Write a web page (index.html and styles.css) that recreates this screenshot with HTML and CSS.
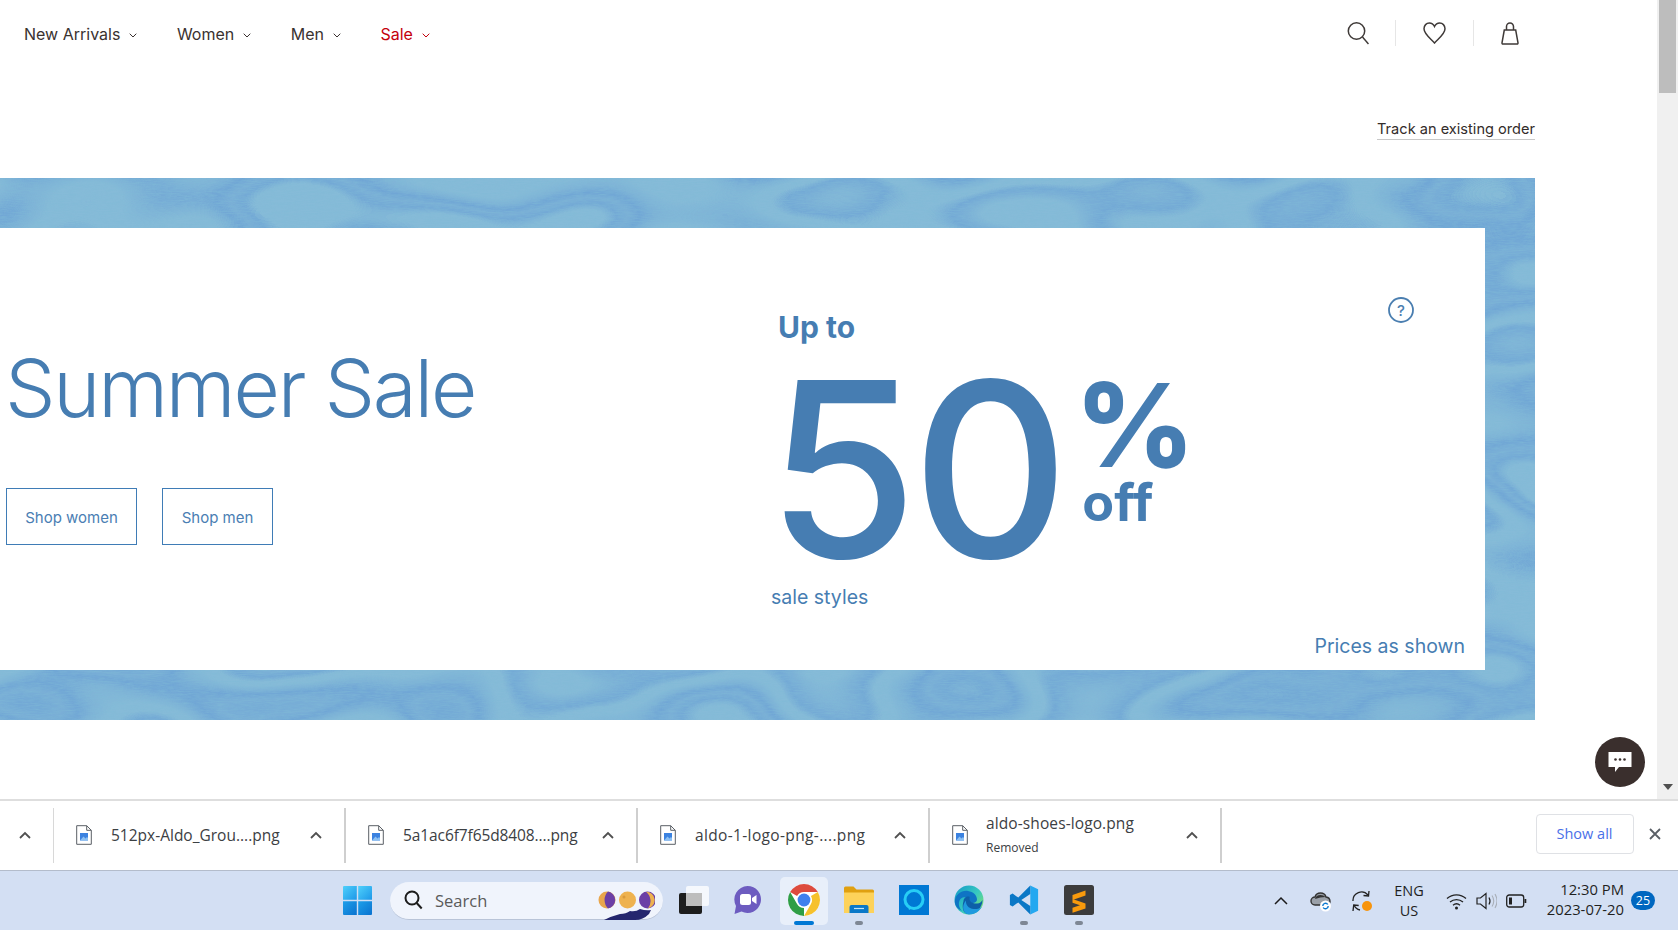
FILE: index.html
```html
<!DOCTYPE html>
<html lang="en">
<head>
<meta charset="utf-8">
<title>Summer Sale</title>
<link rel="stylesheet" href="styles.css">
</head>
<body>
<div class="window">
  <main class="page">
    <header class="topbar">
      <nav class="nav">
        <a class="nav-item">New Arrivals<svg class="chev" viewBox="0 0 8 5"><path d="M.7.7 4 4 7.3.7"/></svg></a>
        <a class="nav-item">Women<svg class="chev" viewBox="0 0 8 5"><path d="M.7.7 4 4 7.3.7"/></svg></a>
        <a class="nav-item">Men<svg class="chev" viewBox="0 0 8 5"><path d="M.7.7 4 4 7.3.7"/></svg></a>
        <a class="nav-item sale">Sale<svg class="chev" viewBox="0 0 8 5"><path d="M.7.7 4 4 7.3.7"/></svg></a>
      </nav>
      <div class="tools">
        <svg class="tool" width="22" height="24" viewBox="0 0 22 24"><circle cx="9.5" cy="10" r="8.2"/><path d="m15.5 16 6 7"/></svg>
        <span class="tool-sep first-sep"></span>
        <svg class="tool" width="23" height="22" viewBox="0 0 23 22"><path d="M11.500 21C7.500 16.500 1 12 1 6.800 1 3.400 3.400 1 6.300 1c2.300 0 4.200 1.400 5.200 3.500C12.500 2.400 14.400 1 16.700 1 19.600 1 22 3.400 22 6.800 22 12 15.500 16.500 11.500 21z"/></svg>
        <span class="tool-sep"></span>
        <svg class="tool" width="18" height="23" viewBox="0 0 18 23"><path d="M3.300 8 1 20.800q-.1 1.200 1 1.200h14q1.100 0 1-1.200L14.700 8zM5.500 8V4.500a3.500 3.500 0 0 1 7 0V8"/></svg>
      </div>
    </header>
    <div class="track-row"><a class="track">Track an existing order</a></div>
    <section class="hero">
      <svg class="texture" aria-hidden="true">
        <filter id="wood" x="0" y="0" width="100%" height="100%" color-interpolation-filters="sRGB">
          <feTurbulence type="fractalNoise" baseFrequency="0.005 0.011" numOctaves="2" seed="23" result="n"/>
          <feColorMatrix in="n" type="matrix" values="0 0 0 0 .42  0 0 0 0 .63  0 0 0 0 .83  1.6 0 0 0 -.3"/>
          <feComponentTransfer result="bands"><feFuncA type="table" tableValues="0 0 0 .7 .45 .8 .3 0 0 .7 .4 0 0 0"/></feComponentTransfer>
          <feTurbulence type="fractalNoise" baseFrequency="0.12 1.1" numOctaves="2" seed="3"/>
          <feColorMatrix type="matrix" values="0 0 0 0 .5  0 0 0 0 .73  0 0 0 0 .84  0 1 0 0 -.35" result="grain"/>
          <feMerge><feMergeNode in="bands"/><feMergeNode in="grain"/></feMerge>
        </filter>
        <rect width="100%" height="100%" filter="url(#wood)"/>
      </svg>
      <div class="panel">
        <div class="panel-left">
          <h1 class="title">Summer Sale</h1>
          <div class="actions">
            <a class="btn btn-women">Shop women</a>
            <a class="btn btn-men">Shop men</a>
          </div>
        </div>
        <div class="promo">
          <div class="upto">Up to</div>
          <div class="deal">
            <span class="fifty">50</span>
            <span class="deal-side"><span class="pct">%</span><span class="off">off</span></span>
          </div>
          <div class="styles">sale styles</div>
        </div>
        <svg class="help" width="26" height="26" viewBox="0 0 26 26"><circle cx="13" cy="13" r="12"/><text x="13" y="18.500" text-anchor="middle">?</text></svg>
        <div class="prices">Prices as shown</div>
      </div>
    </section>
    <button class="chat" aria-label="Chat"><svg width="24" height="21" viewBox="0 0 24 21"><path d="M.5 0h23v15H11l-4 5v-5H.5z" fill="#fff"/><circle cx="7.500" cy="7.500" r="1.300" fill="#3a2f2d"/><circle cx="12" cy="7.500" r="1.300" fill="#3a2f2d"/><circle cx="16.500" cy="7.500" r="1.300" fill="#3a2f2d"/></svg></button>
  </main>
  <aside class="scrollbar">
    <div class="thumb"></div>
    <svg class="scroll-down" width="10" height="6" viewBox="0 0 10 6"><path d="M0 0h10L5 6z" fill="#505050"/></svg>
  </aside>
</div>

<div class="downloads">
  <div class="dl-toggle"><svg class="caret" viewBox="0 0 12 8"><path d="M1 7 6 2l5 5"/></svg></div>
  <div class="dl-item">
    <svg class="file" viewBox="0 0 16 20"><path class="file-page" d="M.7.7h10l4.600 4.600V19.300H.7z"/><path class="file-fold" d="M10.700.7v4.600h4.600"/><path class="file-pic" d="M4 8h8v7.500H4z"/><path class="file-hill" d="m4 15.500 3.500-4 2 2 1.500-1.500 1 1v2.500z"/></svg>
    <span class="dl-name">512px-Aldo_Grou....png</span>
    <svg class="caret dl-caret" viewBox="0 0 12 8"><path d="M1 7 6 2l5 5"/></svg>
  </div>
  <div class="dl-item">
    <svg class="file" viewBox="0 0 16 20"><path class="file-page" d="M.7.7h10l4.600 4.600V19.300H.7z"/><path class="file-fold" d="M10.700.7v4.600h4.600"/><path class="file-pic" d="M4 8h8v7.500H4z"/><path class="file-hill" d="m4 15.500 3.500-4 2 2 1.500-1.500 1 1v2.500z"/></svg>
    <span class="dl-name dl-tight">5a1ac6f7f65d8408....png</span>
    <svg class="caret dl-caret" viewBox="0 0 12 8"><path d="M1 7 6 2l5 5"/></svg>
  </div>
  <div class="dl-item">
    <svg class="file" viewBox="0 0 16 20"><path class="file-page" d="M.7.7h10l4.600 4.600V19.300H.7z"/><path class="file-fold" d="M10.700.7v4.600h4.600"/><path class="file-pic" d="M4 8h8v7.500H4z"/><path class="file-hill" d="m4 15.500 3.500-4 2 2 1.500-1.500 1 1v2.500z"/></svg>
    <span class="dl-name dl-wide">aldo-1-logo-png-....png</span>
    <svg class="caret dl-caret" viewBox="0 0 12 8"><path d="M1 7 6 2l5 5"/></svg>
  </div>
  <div class="dl-item">
    <svg class="file" viewBox="0 0 16 20"><path class="file-page" d="M.7.7h10l4.600 4.600V19.300H.7z"/><path class="file-fold" d="M10.700.7v4.600h4.600"/><path class="file-pic" d="M4 8h8v7.500H4z"/><path class="file-hill" d="m4 15.500 3.500-4 2 2 1.500-1.500 1 1v2.500z"/></svg>
    <span class="dl-name dl-stack">aldo-shoes-logo.png<small class="dl-status">Removed</small></span>
    <svg class="caret dl-caret" viewBox="0 0 12 8"><path d="M1 7 6 2l5 5"/></svg>
  </div>
  <a class="show-all">Show all</a>
  <svg class="dl-close" width="12" height="12" viewBox="0 0 12 12"><path d="m1 1 10 10M11 1 1 11"/></svg>
</div>

<footer class="taskbar">
  <svg class="start" width="29" height="29" viewBox="0 0 29 29">
    <defs>
      <linearGradient id="win1" x1="0" y1="0" x2="1" y2="1"><stop offset="0" stop-color="#4fd0fb"/><stop offset="1" stop-color="#1c97e8"/></linearGradient>
      <linearGradient id="win2" x1="0" y1="0" x2="1" y2="1"><stop offset="0" stop-color="#1ea0ea"/><stop offset="1" stop-color="#0a72cf"/></linearGradient>
    </defs>
    <path d="M1 0h12.800v13.800H0V1q0-1 1-1z" fill="url(#win1)"/><path d="M15.200 0H28q1 0 1 1v12.800H15.200z" fill="url(#win1)"/><path d="M0 15.200h13.800V29H1q-1 0-1-1z" fill="url(#win2)"/><path d="M15.200 15.200H29V28q0 1-1 1H15.200z" fill="url(#win2)"/>
  </svg>
  <div class="search">
    <svg class="search-ic" width="19" height="20" viewBox="0 0 19 20"><circle cx="8" cy="8" r="6.500"/><path d="m12.700 13 5 5.500"/></svg>
    <span class="search-text">Search</span>
    <svg class="moons" width="62" height="38" viewBox="0 0 62 38">
      <circle cx="14" cy="18" r="8.500" fill="#e9a64c"/><path d="M15 9.600a8.500 8.500 0 0 1 0 16.800 12 12 0 0 1 0-16.800z" fill="#6b3fa6"/>
      <circle cx="34.500" cy="18" r="8.500" fill="#eeb24f"/><circle cx="31" cy="15" r="1.500" fill="#d99a3c"/>
      <circle cx="54.500" cy="18" r="8.500" fill="#6b3fa6"/><path d="M53 9.700a8.500 8.500 0 0 1 2 16.800 12 12 0 0 0-2-16.800z" fill="#eeb24f"/>
      <path d="M11 38q8-4 16-6 6 0 10-3 6 1 10-2 6 2 11 1l-2 4q-6 6-14 6z" fill="#24266e"/>
    </svg>
  </div>
  <div class="apps">
    <span class="app">
      <svg width="30" height="30" viewBox="0 0 30 30"><rect x="0" y="8" width="23" height="21" rx="2" fill="#1d1d1d"/><rect x="7" y="1" width="23" height="20" rx="2" fill="#fff" opacity=".78"/><rect x="7" y="8" width="16" height="13" fill="#bdbdbd"/></svg>
    </span>
    <span class="app app-meet">
      <svg width="30" height="30" viewBox="0 0 30 30"><path d="M15.500 1a13.500 13.500 0 1 1-6 25.600L2.500 29 4 21A13.500 13.500 0 0 1 15.500 1z" fill="#6d5cc0"/><rect x="8" y="9" width="11" height="11" rx="2.500" fill="#fff"/><path d="m20 13 4.500-3v9L20 16z" fill="#fff"/></svg>
    </span>
    <span class="app app-active">
      <svg width="32" height="32" viewBox="4 4 40 40"><circle cx="24" cy="24" r="20" fill="#fff"/><path d="M6.680 14A20 20 0 0 1 41.320 14H24a10 10 0 0 0-8.660 5z" fill="#dd4b3e"/><path d="M6.680 14A20 20 0 0 0 24 44l0-10a10 10 0 0 1-8.660-5z" fill="#2f9e46"/><path d="M41.320 14A20 20 0 0 1 24 44l8.660-15a10 10 0 0 0 0-10z" fill="#f6c12c"/><circle cx="24" cy="24" r="8" fill="#4080ee"/></svg>
      <i class="dot-active"></i>
    </span>
    <span class="app">
      <svg width="30" height="30" viewBox="0 0 30 30"><path d="M0 3q0-1.500 1.500-1.500h8l3 3h16q1.500 0 1.500 1.500v5H0z" fill="#e0a010"/><path d="M0 7.500h30V28H0z" fill="#fdd25a"/><path d="M5.500 22q0-2 2-2h15q2 0 2 2v6h-19z" fill="#0a78c8"/><path d="M10 23.500h10" stroke="#bfe3f8" stroke-width="1.200"/></svg>
      <i class="dot"></i>
    </span>
    <span class="app">
      <svg width="30" height="30" viewBox="0 0 30 30"><rect width="30" height="30" fill="#0078d4"/><circle cx="15" cy="14.500" r="9" fill="none" stroke="#27cdf5" stroke-width="3"/><path d="m9 21 1 4 4-2.500z" fill="#27cdf5"/></svg>
    </span>
    <span class="app">
      <svg width="30" height="30" viewBox="0 0 30 30">
        <defs><linearGradient id="edge1" x1="0" y1="0" x2="1" y2=".8"><stop offset="0" stop-color="#1298c8"/><stop offset=".6" stop-color="#38c9c0"/><stop offset="1" stop-color="#7de06e"/></linearGradient></defs>
        <circle cx="15" cy="15" r="14.500" fill="url(#edge1)"/>
        <path d="M.8 17C1 9 8 5 14 6c5 .800 9 4 9 8.500 0 2-2 3.500-4.500 3.500-2 0-3.500-.700-3.500-2.500 0-3-5-4.500-8-2C4 16 4 22 8 26 3.500 24 1 21 .8 17z" fill="#0f74c4"/>
        <path d="M9.500 16c0-3 3-5 5.500-4.500 1 .200.500 1 .500 2.500 0 3 4 5 8 4.500 2-.200 4-1.500 5-3.500-.300 8-6.500 14-13.500 14-7 0-7-8-5.500-13z" fill="#0d5fa8"/>
        <path d="M15 29.500C9 29 7 21 12 15.500c-.500 4 2 8 8 8.500 3 .200 6-.500 8-2.500-2.500 5-7.500 8-13 8z" fill="#1f9adf"/>
      </svg>
    </span>
    <span class="app">
      <svg width="30" height="30" viewBox="0 0 100 100"><path d="M71 2 97 14v72L71 98z" fill="#24a8f0"/><path d="M71 2 31 42 12 28 3 33v34l9 5 19-14 40 40V70L41 50 71 30z" fill="#0b78c6"/></svg>
      <i class="dot"></i>
    </span>
    <span class="app">
      <svg width="30" height="30" viewBox="0 0 30 30"><rect width="30" height="30" rx="2.500" fill="#3c3c3c"/><path d="M21.500 5.500v5L8.500 15v-5zM8.500 14l13 4.500v5l-13 4.200v-5l7.500-2.500-7.500-2.500z" fill="#f89a0c"/></svg>
      <i class="dot"></i>
    </span>
  </div>
  <div class="tray">
    <svg class="tray-caret" width="14" height="9" viewBox="0 0 14 9"><path d="M1 8 7 2l6 6"/></svg>
    <svg class="tray-ic cloud" width="22" height="22" viewBox="0 0 22 22"><path d="M5 15a4 4 0 0 1 0-8q1-4 5.500-4 4.500 0 5.500 4 4 .500 4 4.500 0 3.500-4 3.500z" fill="#9aa0a8" stroke="#333" stroke-width="1.400"/><path d="M5 9q1-4 5.500-4 3 0 5 2-5 0-10.500 2z" fill="#333"/><circle cx="15.500" cy="16" r="5.500" fill="#fff"/><path d="M12.800 16a2.700 2.700 0 0 1 5-1.500M18.200 16a2.700 2.700 0 0 1-5 1.500" fill="none" stroke="#0b78d0" stroke-width="1.400"/></svg>
    <svg class="tray-ic sync" width="22" height="22" viewBox="0 0 22 22"><path d="M2 11a8.500 8.500 0 0 1 15-6M3 15a8.500 8.500 0 0 0 6 5" fill="none" stroke="#222" stroke-width="1.300"/><path d="m18 1 -.500 5-5-.500M2 21l.700-6 5 .500" fill="none" stroke="#222" stroke-width="1.300"/><circle cx="16" cy="16" r="5" fill="#f7940c"/></svg>
    <div class="lang"><span>ENG</span><span>US</span></div>
    <svg class="tray-ic wifi" width="21" height="18" viewBox="0 0 21 18"><path d="M1 6.500a14 14 0 0 1 19 0M4 10a10 10 0 0 1 13 0M7 13.200a5.500 5.500 0 0 1 7 0" fill="none" stroke="#222" stroke-width="1.300"/><circle cx="10.500" cy="16" r="1.500" fill="#222"/></svg>
    <svg class="tray-ic vol" width="21" height="18" viewBox="0 0 21 18"><path d="M1 6h3.500L10 1.500v15L4.500 12H1z" fill="none" stroke="#222" stroke-width="1.200"/><path d="M13 5.500q2 3.500 0 7" fill="none" stroke="#222" stroke-width="1.200"/><path d="M16 3.500q3.500 5.500 0 11M19 2q4 7 0 14" fill="none" stroke="#a9afb8" stroke-width="1.100"/></svg>
    <svg class="tray-ic batt" width="21" height="14" viewBox="0 0 21 14"><rect x=".7" y="1" width="17" height="12" rx="2.500" fill="none" stroke="#222" stroke-width="1.300"/><rect x="3" y="3.500" width="3" height="7" fill="#222"/><path d="M18.500 5h1.800v4h-1.800z" fill="#222"/></svg>
    <div class="clock"><span>12:30 PM</span><span>2023-07-20</span></div>
    <span class="badge">25</span>
  </div>
</footer>
</body>
</html>
```

FILE: styles.css
```css
* { box-sizing: border-box; }
html, body { margin: 0; padding: 0; }
body {
  width: 1678px;
  height: 930px;
  overflow: hidden;
  display: flex;
  flex-direction: column;
  background: #fff;
  font-family: "Inter", "Liberation Sans", sans-serif;
  color: #3a3230;
}

/* browser viewport */
.window { height: 799px; display: flex; }
.page { flex: 1; position: relative; overflow: hidden; background: #fff; }
.scrollbar { width: 21px; background: #f0f0f0; display: flex; flex-direction: column; align-items: center; justify-content: space-between; padding: 0 0 9px; }
.thumb { width: 17px; height: 93px; background: #bdbdbd; }

/* header */
.topbar { height: 68px; display: flex; align-items: center; justify-content: space-between; padding: 0 138px 0 24px; }
.nav { display: flex; gap: 39.500px; }
.nav-item { display: flex; align-items: center; font-size: 16px; line-height: 20px; color: #3a3230; }
.nav-item.sale { color: #c4000c; }
.chev { width: 8px; height: 5px; margin-left: 9px; margin-top: 2px; fill: none; stroke: currentColor; stroke-width: 1; }
.tools { display: flex; align-items: center; gap: 27px; margin-top: -2px; }
.tool { fill: none; stroke: #3f3a38; stroke-width: 1.500; display: block; }
.tool-sep { width: 1px; height: 26px; background: #e6e6e6; }
.first-sep { margin-left: -1px; }

.track-row { height: 110px; display: flex; justify-content: flex-end; padding: 52px 122px 0 0; }
.track { font-size: 14.600px; line-height: 19px; height: 20px; border-bottom: 1px solid #c8c8c8; color: #332c2a; }

/* hero */
.hero { position: relative; width: 1535px; height: 542px; padding: 50px 50px 50px 0; background: #86bbd8; }
.texture { position: absolute; inset: 0; width: 100%; height: 100%; display: block; }
.panel { position: relative; height: 442px; background: #fff; display: flex; color: #467db2; }
.panel-left { width: 771px; padding: 110px 0 0 6px; }
.title { margin: 0 0 0 -1px; font-size: 80px; line-height: 100px; font-weight: 300; letter-spacing: -2.200px; color: #467db2; white-space: nowrap; }
.actions { display: flex; gap: 25px; margin-top: 50px; }
.btn { height: 57px; padding-top: 1px; display: flex; align-items: center; justify-content: center; border: 1.500px solid #3f7cb6; font-size: 15px; color: #4a7eb3; }
.btn-women { width: 131px; }
.btn-men { width: 111px; }

.promo { padding-top: 81px; }
.upto { font-size: 30px; line-height: 36px; font-weight: 700; margin-left: 7px; }
.deal { display: flex; margin-top: 25px; height: 214px; }
.fifty { font-size: 244px; line-height: 200px; height: 200px; font-weight: 500; letter-spacing: -6px; margin-left: -4px; }
.deal-side { display: flex; flex-direction: column; margin-left: 12px; padding-top: 5px; }
.pct { font-size: 116px; line-height: 100px; font-weight: 800; }
.off { font-size: 52px; line-height: 50px; font-weight: 700; margin: 3px 0 0 7px; }
.styles { font-size: 19.500px; line-height: 26px; }

.help { position: absolute; left: 1388px; top: 69px; }
.help circle { fill: none; stroke: #4a7eb0; stroke-width: 1.800; }
.help text { font-family: "Inter", sans-serif; font-size: 15px; font-weight: 500; fill: #4a7eb0; }
.prices { position: absolute; right: 20px; bottom: 11px; font-size: 19.500px; line-height: 26px; }

.chat { position: absolute; left: 1595px; top: 737px; width: 50px; height: 50px; border: 0; border-radius: 50%; background: #3a2f2d; padding: 0; display: flex; align-items: center; justify-content: center; }

/* downloads bar */
.downloads { height: 71px; background: #fff; border-top: 2px solid #dedede; display: flex; align-items: center; font-family: "Open Sans", "Noto Sans", sans-serif; }
.dl-toggle { width: 54px; height: 55px; border-right: 1px solid #d8d8d8; display: flex; align-items: center; padding: 0 0 2px 19px; }
.caret { width: 12px; height: 8px; fill: none; stroke: #505050; stroke-width: 1.800; display: block; }
.dl-item { width: 292px; height: 55px; border-right: 2px solid #cfcfcf; display: flex; align-items: center; padding: 0 22px 2px 22px; }
.file { width: 16px; height: 20px; flex: none; }
.file-page { fill: #fff; stroke: #5a5f66; stroke-width: 1; }
.file-fold { fill: none; stroke: #5a5f66; stroke-width: 1; }
.file-pic { fill: #3b82e0; }
.file-hill { fill: #8cc0f2; }
.dl-name { margin-left: 19px; font-size: 15.500px; line-height: 20px; color: #3c4043; flex: 1; white-space: nowrap; }
.dl-tight { letter-spacing: -.1px; }
.dl-wide { letter-spacing: .35px; }
.dl-stack { display: flex; flex-direction: column; margin-left: 18px; letter-spacing: .1px; }
.dl-status { font-size: 12px; line-height: 17px; margin-top: 6px; color: #3c4043; letter-spacing: 0; }
.dl-caret { flex: none; }
.show-all { margin: 0 0 3px auto; width: 98px; height: 40px; padding: 0 1px 2px 0; border: 1px solid #dfe1e5; border-radius: 4px; display: flex; align-items: center; justify-content: center; font-size: 14.500px; color: #4a6fe8; }
.dl-close { margin: 0 17px 3px 15px; fill: none; stroke: #5a5f66; stroke-width: 1.800; }

/* taskbar */
.taskbar { flex: 1; background: #d3dff3; border-top: 1px solid #b3bccb; display: flex; align-items: center; padding-left: 343px; font-family: "Open Sans", "Noto Sans", sans-serif; color: #1f1f1f; }
.start { flex: none; }
.search { width: 273px; height: 38px; margin-left: 18px; border-radius: 19px; background: #f0f4fc; border-bottom: 1px solid #b9c4d8; display: flex; align-items: center; padding-left: 14px; position: relative; }
.search-ic { fill: none; stroke: #1c1c1c; stroke-width: 2; }
.search-text { margin-left: 12px; font-size: 16.500px; color: #5a5a5a; }
.moons { position: absolute; right: 8px; top: 0; }
.apps { display: flex; margin-left: 3px; }
.app { width: 55px; height: 48px; padding-bottom: 2px; display: flex; align-items: center; justify-content: center; position: relative; }
.app-meet { padding-right: 4px; }
.app-active { background: #e8effa; border-radius: 5px; width: 48px; margin: 0 3.500px; }
.dot, .dot-active { position: absolute; bottom: 0; left: 50%; height: 4px; border-radius: 2px; transform: translateX(-50%); }
.dot { width: 8px; background: #7e8794; }
.dot-active { width: 20px; background: #0078d4; }
.tray { margin-left: auto; display: flex; align-items: center; padding-right: 23px; }
.tray-ic { display: block; flex: none; }
.tray-caret { fill: none; stroke: #1c1c1c; stroke-width: 1.500; }
.cloud { margin-left: 22px; }
.sync { margin-left: 19px; }
.lang { width: 44px; margin-left: 14px; display: flex; flex-direction: column; align-items: center; font-size: 14.500px; line-height: 20px; }
.wifi { margin-left: 15px; }
.vol { margin-left: 9px; }
.batt { margin-left: 9px; }
.clock { width: 90px; margin: -3px 0 0 7px; display: flex; flex-direction: column; align-items: flex-end; font-size: 14.800px; line-height: 20px; }
.badge { width: 24px; height: 19px; margin-left: 7px; border-radius: 10px; background: #0067c0; color: #fff; font-size: 12.500px; display: flex; align-items: center; justify-content: center; }
```
